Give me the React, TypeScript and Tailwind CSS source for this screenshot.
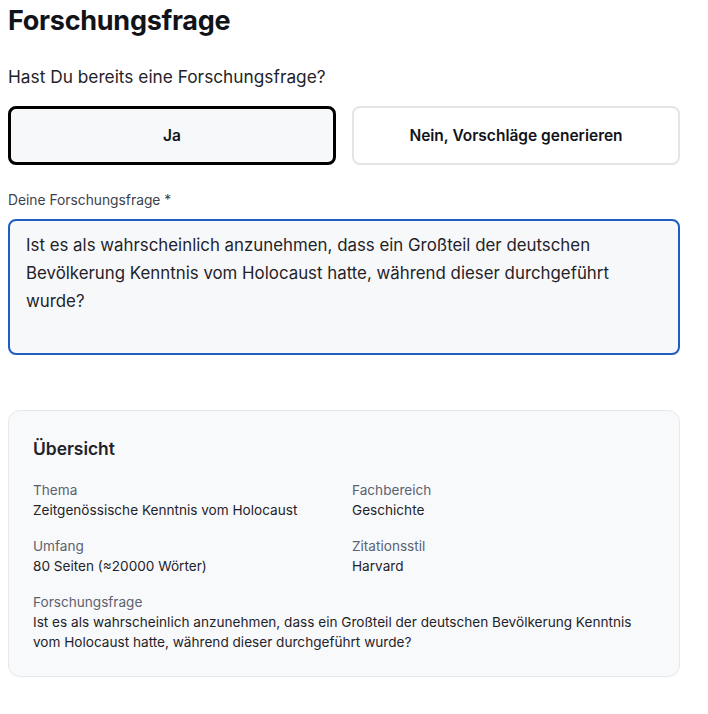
import { useState } from "react";

const question =
  "Ist es als wahrscheinlich anzunehmen, dass ein Großteil der deutschen Bevölkerung Kenntnis vom Holocaust hatte, während dieser durchgeführt wurde?";

function Field({ label, value, full }: { label: string; value: string; full?: boolean }) {
  return (
    <div className={full ? "col-span-2" : ""}>
      <div className="text-[13.6px] leading-5 text-[#5b6270]">{label}</div>
      <div className="text-[13.6px] leading-5 text-[#1f2329]">{value}</div>
    </div>
  );
}

export default function App() {
  const [hasQuestion, setHasQuestion] = useState(true);
  const [text, setText] = useState(question);

  return (
    <div className="bg-white px-2 pt-[3px] text-[#111318] font-['Inter','Liberation_Sans',sans-serif] w-[688px]">
      <h1 className="text-[27px] leading-9 font-bold tracking-[-0.01em]">Forschungsfrage</h1>

      <p className="mt-[26px] text-[17.3px] leading-6 text-[#1f2329]">Hast Du bereits eine Forschungsfrage?</p>

      <div className="mt-[17px] grid grid-cols-2 gap-4">
        <button
          onClick={() => setHasQuestion(true)}
          className={`h-[59px] rounded-lg text-[15.5px] font-semibold ${
            hasQuestion ? "border-[3px] border-black bg-[#f7f8fa]" : "border-2 border-[#e3e5e8] bg-white"
          }`}
        >
          Ja
        </button>
        <button
          onClick={() => setHasQuestion(false)}
          className={`h-[59px] rounded-lg text-[15.5px] font-semibold ${
            !hasQuestion ? "border-[3px] border-black bg-[#f7f8fa]" : "border-2 border-[#e3e5e8] bg-white"
          }`}
        >
          Nein, Vorschläge generieren
        </button>
      </div>

      <label className="mt-[25px] block text-[13.8px] leading-5 text-[#3d424a]">Deine Forschungsfrage *</label>
      <textarea
        value={text}
        onChange={(e) => setText(e.target.value)}
        className="mt-[9px] block h-[136px] w-full resize-none rounded-lg border-2 border-[#1f5cc4] bg-[#f7f8fa] px-4 py-[10px] text-[16.85px] leading-7 text-[#1f2329] outline-none"
      />

      <div className="mt-[55px] rounded-xl border border-[#e5e7eb] bg-[#f8f9fb] p-6">
        <h2 className="text-[17.4px] leading-7 font-semibold text-[#1f2329]">Übersicht</h2>
        <div className="mt-[17px] grid grid-cols-2 gap-x-4 gap-y-4">
          <Field label="Thema" value="Zeitgenössische Kenntnis vom Holocaust" />
          <Field label="Fachbereich" value="Geschichte" />
          <Field label="Umfang" value="80 Seiten (≈20000 Wörter)" />
          <Field label="Zitationsstil" value="Harvard" />
          <Field label="Forschungsfrage" value={text} full />
        </div>
      </div>
    </div>
  );
}
